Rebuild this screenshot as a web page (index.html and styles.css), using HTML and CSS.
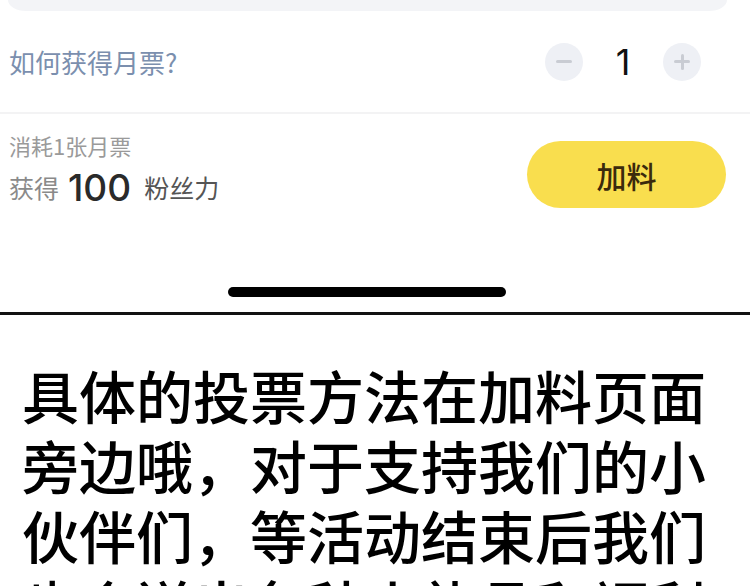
FILE: index.html
```html
<!DOCTYPE html>
<html lang="zh-CN">
<head>
<meta charset="utf-8">
<title>加料</title>
<link rel="stylesheet" href="styles.css">
</head>
<body>
<div class="sheet">
  <div class="top-card"></div>
  <div class="row-ask">
    <span class="ask-link">如何获得月票?</span>
    <div class="stepper">
      <span class="step-btn step-minus"><span class="bar-h"></span></span>
      <span class="step-num">1</span>
      <span class="step-btn step-plus"><span class="bar-h"></span><span class="bar-v"></span></span>
    </div>
  </div>
  <div class="divider"></div>
  <div class="row-pay">
    <div class="pay-info">
      <div class="cost">消耗1张月票</div>
      <div class="gain"><span class="gain-label">获得</span><span class="gain-num">100</span><span class="gain-unit">粉丝力</span></div>
    </div>
    <button class="pay-btn">加料</button>
  </div>
  <div class="home-area"><span class="home-indicator"></span></div>
</div>
<div class="caption">
  <p class="caption-text">具体的投票方法在加料页面旁边哦，对于支持我们的小伙伴们，等活动结束后我们也会送出各种小礼品和福利</p>
</div>
</body>
</html>
```
FILE: styles.css
```css
html, body {
  margin: 0;
  padding: 0;
  background: #ffffff;
}
body {
  width: 750px;
  height: 586px;
  overflow: hidden;
  font-family: "Noto Sans CJK SC", "Noto Sans", sans-serif;
}
.sheet {
  background: #ffffff;
  border-bottom: 3px solid #111111;
}
.top-card {
  height: 11px;
  margin: 0 23px 0 8px;
  background: #f3f4f7;
  border-radius: 0 0 18px 18px / 0 0 11px 11px;
}
.row-ask {
  height: 101px;
  display: flex;
  align-items: center;
  justify-content: space-between;
  padding: 0 49px 0 9px;
}
.ask-link {
  font-size: 26px;
  color: #7b8fae;
  line-height: 32px;
}
.stepper {
  display: flex;
  align-items: center;
}
.step-btn {
  width: 38px;
  height: 38px;
  border-radius: 50%;
  background: #eef0f5;
  position: relative;
  display: block;
}
.bar-h, .bar-v {
  position: absolute;
  background: #c9ccd3;
  border-radius: 2px;
}
.bar-h {
  width: 16px;
  height: 3px;
  left: 11px;
  top: 17px;
}
.bar-v {
  width: 3px;
  height: 16px;
  left: 17.5px;
  top: 11px;
}
.step-num {
  width: 80px;
  text-align: center;
  font-family: "Inter", "Noto Sans", sans-serif;
  font-size: 36px;
  font-weight: 400;
  color: #111111;
  line-height: 38px;
}
.divider {
  height: 2px;
  background: #f3f3f4;
}
.row-pay {
  display: flex;
  justify-content: space-between;
  align-items: flex-start;
  padding: 18px 24px 0 9px;
}
.pay-info {
  display: flex;
  flex-direction: column;
  gap: 7px;
}
.cost {
  font-size: 22px;
  line-height: 26px;
  color: #9a9a9a;
}
.gain {
  display: flex;
  align-items: center;
  height: 44px;
}
.gain-label {
  font-size: 25px;
  color: #8a8a8a;
}
.gain-num {
  font-family: "Inter", "Noto Sans", sans-serif;
  font-size: 37px;
  font-weight: 500;
  color: #2a2a2a;
  margin: 0 13px 0 9px;
}
.gain-unit {
  font-size: 25px;
  color: #555555;
}
.pay-btn {
  margin-top: 9px;
  width: 199px;
  height: 67px;
  border: none;
  border-radius: 34px;
  background: #f9de4e;
  color: #3b2a0c;
  font-family: "Noto Sans CJK SC", sans-serif;
  font-size: 30px;
  font-weight: 500;
  padding: 0;
}
.home-area {
  display: flex;
  justify-content: center;
  padding: 78px 0 15px;
}
.home-indicator {
  display: block;
  width: 278px;
  height: 10px;
  border-radius: 5px;
  background: #000000;
  margin-left: -16px;
}
.caption {
  padding: 44px 0 0 22px;
}
.caption-text {
  margin: 0;
  width: 700px;
  font-size: 57px;
  line-height: 70px;
  font-weight: 500;
  color: #000000;
}
```
